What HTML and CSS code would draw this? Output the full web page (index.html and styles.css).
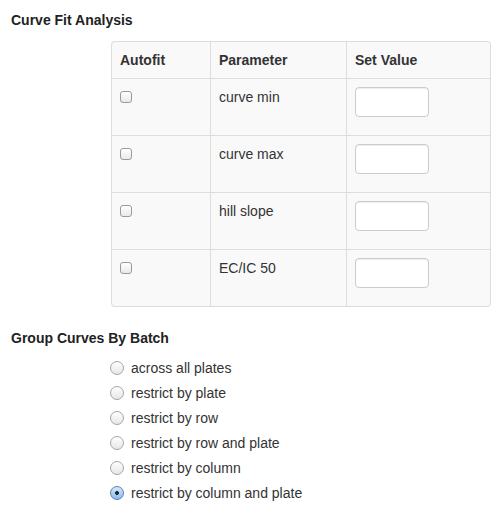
FILE: index.html
```html
<!DOCTYPE html>
<html>
<head>
<meta charset="utf-8">
<link rel="stylesheet" href="styles.css">
</head>
<body>
<div class="page">
  <h4 class="section-title">Curve Fit Analysis</h4>
  <table class="fit-table">
    <thead>
      <tr><th class="c1">Autofit</th><th class="c2">Parameter</th><th class="c3">Set Value</th></tr>
    </thead>
    <tbody>
      <tr><td><input type="checkbox" class="cb"></td><td>curve min</td><td><input type="text" class="val"></td></tr>
      <tr><td><input type="checkbox" class="cb"></td><td>curve max</td><td><input type="text" class="val"></td></tr>
      <tr><td><input type="checkbox" class="cb"></td><td>hill slope</td><td><input type="text" class="val"></td></tr>
      <tr><td><input type="checkbox" class="cb"></td><td>EC/IC 50</td><td><input type="text" class="val"></td></tr>
    </tbody>
  </table>
  <h4 class="section-title second">Group Curves By Batch</h4>
  <div class="radios">
    <label class="radio"><input type="radio" name="batch"><span>across all plates</span></label>
    <label class="radio"><input type="radio" name="batch"><span>restrict by plate</span></label>
    <label class="radio"><input type="radio" name="batch"><span>restrict by row</span></label>
    <label class="radio"><input type="radio" name="batch"><span>restrict by row and plate</span></label>
    <label class="radio"><input type="radio" name="batch"><span>restrict by column</span></label>
    <label class="radio"><input type="radio" name="batch" checked><span>restrict by column and plate</span></label>
  </div>
</div>
</body>
</html>
```
FILE: styles.css
```css
html, body {
  margin: 0;
  padding: 0;
  background: #fff;
}
body {
  font-family: "Liberation Sans", Arial, Helvetica, sans-serif;
  font-size: 14px;
  line-height: 20px;
  color: #333;
}
.page {
  padding: 10px 0 0 11px;
}
.section-title {
  margin: 0;
  font-size: 14px;
  line-height: 20px;
  font-weight: bold;
  color: #222;
}
.section-title.second {
  margin-top: 21px;
}
.fit-table {
  margin: 11px 0 0 100px;
  width: 380px;
  table-layout: fixed;
  border-collapse: separate;
  border-spacing: 0;
  border: 1px solid #ddd;
  border-left: 0;
  border-radius: 4px;
  background: #f9f9f9;
}
.fit-table th,
.fit-table td {
  padding: 8px;
  text-align: left;
  vertical-align: top;
  line-height: 20px;
  border-left: 1px solid #ddd;
  border-top: 1px solid #ddd;
}
.fit-table thead th {
  border-top: 0;
  font-weight: bold;
  color: #333;
}
.fit-table thead th.c1 { width: 82px; border-top-left-radius: 4px; }
.fit-table thead th.c2 { width: 119px; }
.fit-table thead th.c3 { width: auto; }
.fit-table tbody tr:last-child td:first-child { border-bottom-left-radius: 4px; }

.cb {
  -webkit-appearance: none;
  appearance: none;
  display: block;
  width: 12px;
  height: 12px;
  margin: 4px 0 0 0;
  border: 1px solid #9a9a9a;
  border-radius: 3px;
  background: linear-gradient(#ffffff, #e9e9e9);
  box-shadow: inset 0 1px 0 #fff;
}
.val {
  display: block;
  box-sizing: border-box;
  width: 74px;
  height: 30px;
  margin: 0 0 10px 0;
  padding: 4px 6px;
  border: 1px solid #ccc;
  border-radius: 4px;
  background: #fff;
  box-shadow: inset 0 1px 1px rgba(0,0,0,0.075);
  font-family: inherit;
  font-size: 14px;
}
.radios {
  display: flex;
  flex-direction: column;
  gap: 5px;
  margin: 10px 0 0 99px;
}
.radio {
  display: flex;
  align-items: center;
  gap: 7px;
  line-height: 20px;
  color: #333;
}
.radio input {
  -webkit-appearance: none;
  appearance: none;
  flex: none;
  width: 14px;
  height: 14px;
  margin: 0;
  border: 1px solid #a5a5a5;
  border-radius: 50%;
  background: linear-gradient(#ffffff, #e6e6e6);
  box-sizing: border-box;
}
.radio input:checked {
  border-color: #5a7fae;
  background: radial-gradient(circle at 50% 50%, #1d2a3a 0 1.6px, transparent 2.2px),
              linear-gradient(#d6e8fb, #8cb9ee);
}
```
